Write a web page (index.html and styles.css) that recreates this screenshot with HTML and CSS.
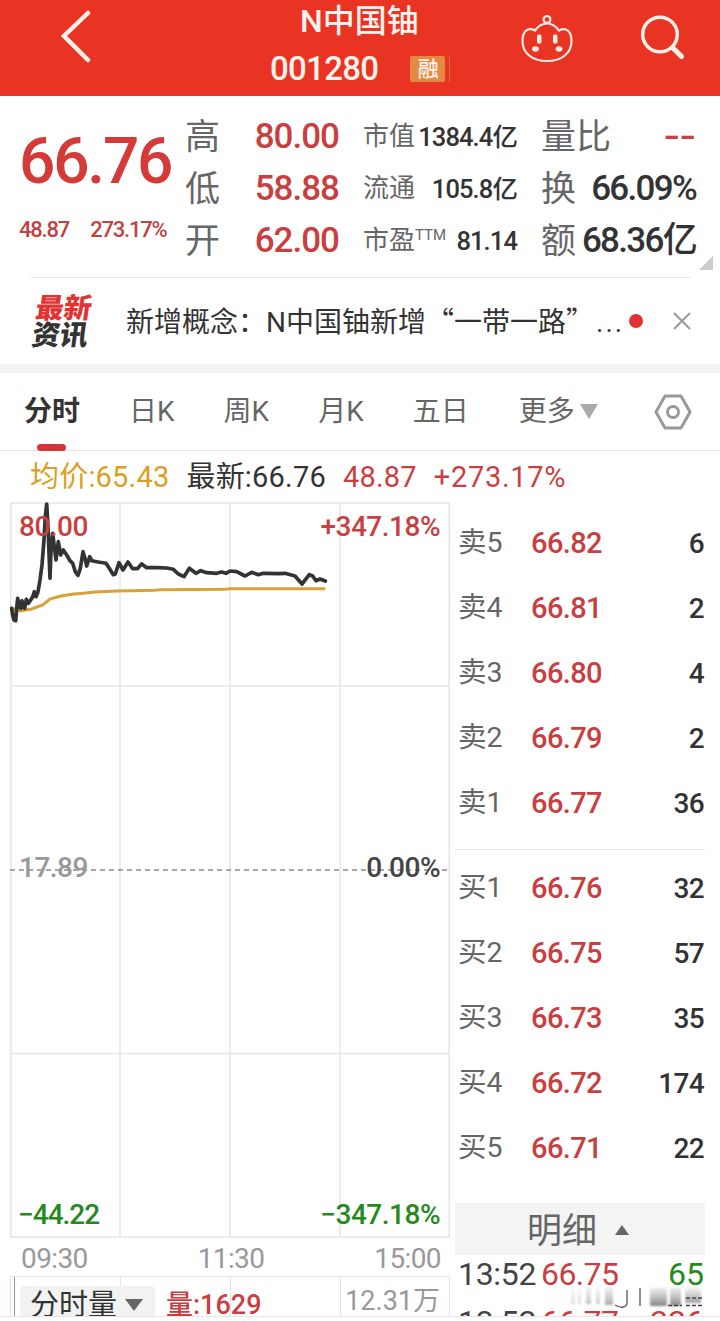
FILE: index.html
```html
<!DOCTYPE html>
<html lang="zh-CN">

<head>
    <meta charset="UTF-8">
    <meta name="viewport" content="width=device-width, initial-scale=1.0">
    <title>N中国铀 001280</title>
    <link rel="stylesheet" href="styles.css">
</head>

<body>
    <header class="topbar">
        <svg class="back" width="32" height="54" viewBox="0 0 32 54">
            <path d="M28 3L4 26L28 50" fill="none" stroke="#fff0ea" stroke-width="4.500" stroke-linecap="round" />
        </svg>
        <div class="title">
            <h1>N中国铀</h1>
            <div class="code">001280<span class="tag">融</span></div>
        </div>
        <svg class="robot" width="52" height="50" viewBox="0 0 52 50">
            <g fill="none" stroke="#ffe9e2" stroke-width="2.200">
                <circle cx="26" cy="5.500" r="3.400" />
                <path d="M14 16.500C18 11 22 9.500 26 9.500S34 11 38 16.500C45 13 50.500 17 50.500 27C50.500 39 41 47 26 47S1.500 39 1.500 27C1.500 17 7 13 14 16.500Z" />
            </g>
            <g fill="#ffe9e2">
                <rect x="16" y="20.500" width="4.500" height="9" rx="1.500" />
                <rect x="32" y="20.500" width="4.500" height="9" rx="1.500" />
                <ellipse cx="14.500" cy="35" rx="3.400" ry="2.800" />
                <ellipse cx="38" cy="35" rx="3.400" ry="2.800" />
            </g>
        </svg>
        <svg class="search" width="46" height="46" viewBox="0 0 46 46">
            <g fill="none" stroke="#fff0ea" stroke-linecap="round">
                <circle cx="20" cy="19.500" r="17.300" stroke-width="3.500" />
                <path d="M32.500 32.500L41.500 41.500" stroke-width="5.200" />
            </g>
        </svg>
    </header>

    <section class="quote">
        <div class="now">
            <div class="price">66.76</div>
            <div class="change"><span>48.87</span><span>273.17%</span></div>
        </div>
        <dl class="col hl">
            <div><dt>高</dt><dd>80.00</dd></div>
            <div><dt>低</dt><dd>58.88</dd></div>
            <div><dt>开</dt><dd>62.00</dd></div>
        </dl>
        <dl class="col cap">
            <div><dt>市值</dt><dd>1384.4亿</dd></div>
            <div><dt>流通</dt><dd>105.8亿</dd></div>
            <div><dt>市盈<sup>TTM</sup></dt><dd>81.14</dd></div>
        </dl>
        <dl class="col vol">
            <div><dt>量比</dt><dd class="dash">--</dd></div>
            <div><dt>换</dt><dd>66.09%</dd></div>
            <div><dt>额</dt><dd>68.36亿</dd></div>
        </dl>
        <i class="corner"></i>
    </section>

    <section class="news">
        <div class="news-logo"><b>最新</b><b>资讯</b></div>
        <p>新增概念：N中国铀新增<q>一带一路</q><span class="more">...</span></p>
        <i class="dot"></i>
        <svg width="18" height="18" viewBox="0 0 18 18">
            <path d="M1 1L17 17M17 1L1 17" stroke="#999" stroke-width="2" />
        </svg>
    </section>

    <nav class="tabs">
        <a class="active">分时</a>
        <a>日K</a>
        <a>周K</a>
        <a>月K</a>
        <a>五日</a>
        <a>更多<i class="caret"></i></a>
        <svg width="38" height="36" viewBox="0 0 38 36">
            <g fill="none" stroke="#999" stroke-width="3" stroke-linejoin="round">
                <path d="M11 2H27L36 18L27 34H11L2 18Z" />
                <circle cx="19" cy="18" r="5.500" />
            </g>
        </svg>
    </nav>

    <div class="legend">
        <span class="avg">均价:65.43</span>
        <span class="last">最新:66.76</span>
        <span class="red">48.87</span>
        <span class="red">+273.17%</span>
    </div>

    <main class="main">
        <div class="left">
            <div class="chart">
                <svg width="440" height="736" viewBox="0 0 440 736">
                    <g fill="none" stroke="#e6e6e6" stroke-width="1.500">
                        <path d="M0.750 1H439.250V735H0.750Z" />
                        <path d="M110 1V735M220 1V735M330 1V735" />
                        <path d="M0 184H440M0 551.500H440" />
                    </g>
                    <path d="M0 368H440" stroke="#8c8c8c" stroke-width="1.500" stroke-dasharray="5 4" />
                    <polyline fill="none" stroke="#d9a136" stroke-width="3" points="1.7,106.3 10,109 21.7,107 32.7,103 40,97 50,94.3 61.7,92.3 73.3,91.3 85,90 106.7,89 145,88.3 150,87.7 215,87.3 220,86.7 315.3,86.7" />
                </svg>
                <svg class="line" width="440" height="736" viewBox="0 0 440 736">
                    <polyline fill="none" stroke="#333" stroke-width="3.700" stroke-linejoin="round" stroke-linecap="round" points="1.7,106.3 2.7,113 4,118 5.7,118.7 6.7,106 7.7,96.3 9.3,104.7 10.7,106.3 12,98.7 13.3,105.3 14.7,106.3 16.3,97.3 18.3,101.3 20.7,98 22.7,94.7 24.3,89.7 26,94.7 28,89.7 30,78 32,63 34,38 35.3,14.7 36.7,2 38,24.7 40,76.3 41,48 42.7,31.3 44.3,44.7 46,58 48.3,39.7 50.7,53 53.3,48 56.7,53 60,58.7 62.7,61.3 65.3,69.7 68,73.3 70.3,66.3 73,49.7 75,56.3 76.7,64 79.7,54.7 81.7,58.7 88.3,60 96,61.3 99.3,66.3 103.3,72.7 105.3,72 109,60.7 113,68 118,60 122.7,66.7 127.3,66.7 131.7,62 136.7,65.7 146.7,65.7 156.7,66 163.3,67.3 168.3,72 174,74.7 179.3,66.3 186,71.3 190.7,68.7 196.7,70.7 206.7,71.3 211.7,70 216,71.3 220,69 226.7,69.7 235,74 241.7,70.3 248.3,72.7 253.3,71.3 268.3,71.7 275,71.3 285,74 292,82 299.3,72.7 302.7,74 306,78.7 310,77 315.3,79" />
                </svg>
                <span class="lab up tl">80.00</span>
                <span class="lab up tr">+347.18%</span>
                <span class="lab gray ml">17.89</span>
                <span class="lab mr">0.00%</span>
                <span class="lab down bl">−44.22</span>
                <span class="lab down br">−347.18%</span>
            </div>
            <div class="times"><span>09:30</span><span>11:30</span><span>15:00</span></div>
            <div class="volume">
                <span class="vol-btn">分时量<i class="caret"></i></span>
                <span class="vol-now">量:1629</span>
                <span class="vol-max">12.31万</span>
            </div>
        </div>

        <div class="right">
            <ul class="book">
                <li><span>卖5</span><b>66.82</b><em>6</em></li>
                <li><span>卖4</span><b>66.81</b><em>2</em></li>
                <li><span>卖3</span><b>66.80</b><em>4</em></li>
                <li><span>卖2</span><b>66.79</b><em>2</em></li>
                <li><span>卖1</span><b>66.77</b><em>36</em></li>
            </ul>
            <ul class="book buy">
                <li><span>买1</span><b>66.76</b><em>32</em></li>
                <li><span>买2</span><b>66.75</b><em>57</em></li>
                <li><span>买3</span><b>66.73</b><em>35</em></li>
                <li><span>买4</span><b>66.72</b><em>174</em></li>
                <li><span>买5</span><b>66.71</b><em>22</em></li>
            </ul>
            <div class="detail-head">明细<i class="caret-up"></i></div>
            <ul class="detail">
                <li><span>13:52</span><b>66.75</b><em class="green">65</em></li>
                <li><span>13:52</span><b>66.77</b><em>226</em></li>
            </ul>
            <svg class="smear" width="136" height="24" viewBox="0 0 136 24">
                <defs>
                    <filter id="soft"><feGaussianBlur stdDeviation="1.300" /></filter>
                    <linearGradient id="fade" x1="0" y1="0" x2="0" y2="1">
                        <stop offset="0" stop-color="#999" stop-opacity=".2" />
                        <stop offset="1" stop-color="#666" stop-opacity=".8" />
                    </linearGradient>
                </defs>
                <rect x="0" y="5" width="134" height="16" fill="#fff" opacity=".6" filter="url(#soft)" />
                <g filter="url(#soft)" fill="url(#fade)">
                    <rect x="2" y="3" width="4" height="16" opacity=".3" />
                    <rect x="9" y="3" width="3" height="16" opacity=".3" />
                    <rect x="17" y="2" width="5" height="17" opacity=".5" />
                    <rect x="27" y="2" width="4" height="17" opacity=".4" />
                    <rect x="36" y="2" width="8" height="18" opacity=".7" />
                    <rect x="81" y="3" width="17" height="18" />
                    <rect x="101" y="3" width="11" height="18" />
                    <rect x="116" y="3" width="16" height="15" opacity=".8" />
                </g>
                <path d="M46 20Q55 25 58 19V5M71 3V21" fill="none" stroke="#555" stroke-width="1.300" />
                <path d="M99 20.500H113M117 13H134M117 20.500H134" stroke="#444" stroke-width="1.500" stroke-dasharray="4 2" />
            </svg>
        </div>
    </main>
</body>

</html>
```
FILE: styles.css
```css
* {
    box-sizing: border-box;
}

body {
    margin: 0;
    width: 720px;
    height: 1321px;
    overflow: hidden;
    background: #fff;
    color: #333;
    font-family: Roboto, "Noto Sans CJK SC", sans-serif;
    line-height: 1.2;
}

dl, dd, ul, h1, p {
    margin: 0;
    padding: 0;
}

ul {
    list-style: none;
}

i, em {
    font-style: normal;
}

/* header */
.topbar {
    display: flex;
    height: 96px;
    background: #e93323;
    border-bottom: 1px solid #d43a2b;
    color: #fff3ee;
}

.back {
    margin: 10px 0 0 60px;
}

.title {
    width: 210px;
    margin-left: 178px;
}

.title h1 {
    padding-left: 30px;
    font-size: 32px;
    font-weight: 500;
    line-height: 42px;
    white-space: nowrap;
}

.code {
    display: flex;
    align-items: center;
    height: 53px;
    font-size: 33px;
    font-weight: 500;
    letter-spacing: -0.7px;
}

.tag {
    width: 35px;
    height: 26px;
    margin-left: 32px;
    border-radius: 2px;
    background: #e58a43;
    font-size: 21px;
    line-height: 26px;
    text-align: center;
    box-shadow: 4px 0 0 0 #e93323, 5px 0 0 0 #e9673a;
}

.robot {
    margin: 14px 0 0 41px;
}

.search {
    margin: 15px 0 0 67px;
}

/* quote summary */
.quote {
    position: relative;
    display: flex;
    height: 182px;
    padding-top: 15px;
}

.quote::after {
    content: "";
    position: absolute;
    left: 30px;
    right: 29px;
    bottom: 0;
    height: 1px;
    background: #e8e8e8;
}

.now {
    width: 165px;
    margin-left: 19px;
    color: #d33a38;
    white-space: nowrap;
}

.price {
    margin-top: 14px;
    font-size: 64px;
    font-weight: 500;
    line-height: 74px;
    letter-spacing: -2.2px;
}

.change {
    display: flex;
    gap: 21px;
    margin-top: 17px;
    color: #c44043;
    font-size: 22px;
    font-weight: 500;
    line-height: 28px;
    letter-spacing: -1.2px;
}

.col > div {
    display: flex;
    justify-content: space-between;
    align-items: center;
    height: 52px;
    white-space: nowrap;
}

.col dt {
    padding-top: 2px;
    color: #666;
}

.col dd {
    font-weight: 500;
}

.hl {
    width: 154px;
    margin-left: 1px;
    font-size: 35px;
}

.hl dd {
    color: #c93f41;
    letter-spacing: -1px;
}

.cap {
    width: 154px;
    margin-left: 24px;
    font-size: 26px;
}

.cap dt {
    padding-top: 0;
}

.cap dd {
    font-size: 25.5px;
    letter-spacing: -0.9px;
}

.cap sup {
    font-size: 15px;
    line-height: 0;
    vertical-align: 9px;
}

.vol {
    width: 155px;
    margin-left: 24px;
    font-size: 35px;
}

.vol dd {
    letter-spacing: -1.7px;
}

.vol .dash {
    color: #c93f41;
    letter-spacing: 0;
    transform: scaleX(1.35);
    transform-origin: right;
}

.corner {
    position: absolute;
    right: 7px;
    bottom: 8px;
    border-left: 14px solid transparent;
    border-bottom: 14px solid #ccc;
}

/* news strip */
.news {
    display: flex;
    align-items: center;
    height: 95px;
    border-bottom: 9px solid #f4f4f4;
}

.news-logo {
    width: 60px;
    margin-left: 34px;
    padding-top: 1px;
    color: #333;
    font-size: 28px;
    font-weight: 900;
    line-height: 27px;
    transform: skewX(-8deg);
}

.news-logo b {
    display: block;
    font-weight: 900;
}

.news-logo b:first-child {
    color: #e03434;
}

.news p {
    width: 496px;
    margin-left: 32px;
    font-size: 28px;
    line-height: 40px;
    white-space: nowrap;
}

/* full-width quotation marks */
.news q {
    font-family: "Noto Sans CJK SC", sans-serif;
    quotes: "“" "”";
}

.more {
    margin-left: 2px;
    letter-spacing: 2px;
}

.dot {
    width: 14px;
    height: 14px;
    margin: 0 30px 0 7px;
    border-radius: 50%;
    background: #e23330;
}

/* period tabs */
.tabs {
    display: flex;
    align-items: center;
    height: 78px;
    padding-left: 24px;
    border-bottom: 1px solid #e3e3e3;
    color: #666;
    font-size: 28px;
}

.tabs a {
    position: relative;
    display: flex;
    align-items: center;
    margin-right: 49px;
    line-height: 80px;
}

.tabs a:nth-of-type(5) {
    margin-right: 50px;
}

.tabs a:last-of-type {
    margin-right: 56px;
}

.tabs .active {
    color: #333;
    font-weight: 700;
}

.tabs .active::after {
    content: "";
    position: absolute;
    left: 13px;
    bottom: 1px;
    width: 29px;
    height: 7px;
    border-radius: 4px;
    background: #d33638;
}

.caret {
    display: inline-block;
    border: 9px solid transparent;
    border-top: 15px solid #aaa;
    border-bottom: 0;
}

.tabs .caret {
    margin-left: 5px;
}

.legend {
    display: flex;
    gap: 17px;
    height: 51px;
    padding-left: 30px;
    font-size: 29px;
    line-height: 53px;
    letter-spacing: 0.2px;
}

.legend .red:last-child {
    letter-spacing: 0.7px;
}

.avg {
    color: #d9a01f;
}

.red {
    color: #c93f41;
}

/* chart and order book */
.main {
    display: flex;
    height: 815px;
    overflow: hidden;
    padding-left: 10px;
    border-bottom: 1px solid #e6e6e6;
}

.left {
    width: 440px;
}

.chart {
    position: relative;
    height: 736px;
}

.chart .line {
    position: absolute;
    left: 0;
    top: 0;
}

.lab {
    position: absolute;
    color: #444;
    font-size: 28px;
    font-weight: 500;
    line-height: 30px;
    letter-spacing: -0.5px;
}

.lab.up {
    color: #c93f41;
}

.lab.down {
    color: #258a1d;
}

.lab.gray {
    color: #999;
}

.tl { left: 9px; top: 10px; }
.tr { right: 10px; top: 10px; }
.ml { left: 9px; top: 351px; }
.mr { right: 10px; top: 351px; }
.bl { left: 8px; top: 698px; letter-spacing: -1px; }
.br { right: 10px; top: 698px; }

.times {
    display: flex;
    justify-content: space-between;
    height: 38px;
    padding: 0 9px 0 11px;
    color: #999;
    font-size: 28px;
    line-height: 41px;
    letter-spacing: -0.6px;
}

.volume {
    display: flex;
    height: 60px;
    border: 1px solid #e3e3e3;
    box-shadow: inset 3px 0 0 #fff, inset 4px 0 0 #7fb377;
    background: linear-gradient(90deg, transparent 109px, #e3e3e3 109px, #e3e3e3 110px, transparent 110px, transparent 219px, #e3e3e3 219px, #e3e3e3 220px, transparent 220px, transparent 329px, #e3e3e3 329px, #e3e3e3 330px, transparent 330px);
}

.vol-btn {
    width: 135px;
    margin: 9px 0 0 9px;
    padding-left: 10px;
    background: #f2f2f2;
    border-radius: 4px;
    font-size: 29px;
    line-height: 39px;
}

.vol-btn .caret {
    margin-left: 8px;
    border-top-width: 12px;
    border-top-color: #666;
    vertical-align: 4px;
}

.vol-now {
    margin: 9px 0 0 11px;
    color: #c93f41;
    font-size: 27px;
    font-weight: 500;
    line-height: 39px;
}

.vol-max {
    margin: 5px 9px 0 auto;
    color: #999;
    font-size: 27px;
    line-height: 38px;
}

.right {
    position: relative;
    width: 250px;
    margin-left: 5px;
}

.book {
    padding-top: 9px;
    height: 348px;
    border-bottom: 1px solid #e8e8e8;
}

.book li,
.detail li {
    display: flex;
    align-items: center;
    height: 65px;
    padding: 0 1px 0 3px;
    font-size: 29px;
}

.book.buy {
    padding-top: 6px;
    height: 353px;
    border: 0;
}

.book span {
    width: 73px;
    color: #666;
    font-size: 28.5px;
}

.book b {
    color: #c93f41;
    font-weight: 500;
    letter-spacing: -0.6px;
}

.book em {
    margin-left: auto;
    font-size: 28px;
    font-weight: 500;
    letter-spacing: -0.7px;
}

.detail-head {
    display: flex;
    align-items: center;
    height: 52px;
    padding: 5px 0 0 72px;
    background: #f4f4f4;
    color: #666;
    font-size: 35px;
}

.caret-up {
    margin: -3px 0 0 18px;
    border: 7px solid transparent;
    border-bottom: 10px solid #666;
    border-top: 0;
}

.detail {
    height: 61px;
    overflow: hidden;
}

.detail li {
    height: 48px;
    margin-top: -5px;
    margin-bottom: 5px;
    font-size: 32px;
}

.detail span {
    width: 83px;
    color: #444;
    letter-spacing: -0.3px;
}

.detail b {
    font-weight: 400;
    color: #c93f41;
    letter-spacing: -0.6px;
}

.detail em {
    margin-left: auto;
    color: #c93f41;
}

.detail .green {
    color: #258a1d;
}

.smear {
    position: absolute;
    left: 114px;
    top: 783px;
}
```
